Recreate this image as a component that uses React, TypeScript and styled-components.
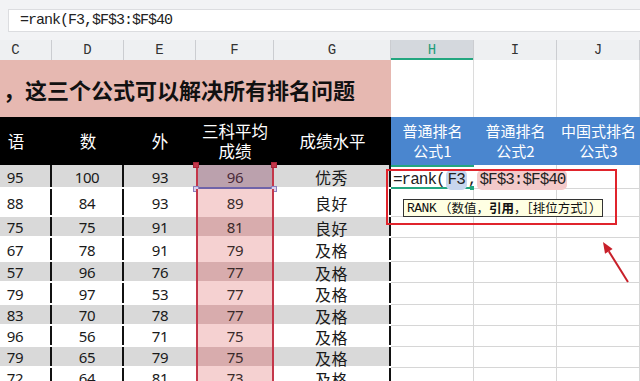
import React from "react";
import styled, { createGlobalStyle } from "styled-components";

const GlobalStyle = createGlobalStyle`
  html, body { margin: 0; padding: 0; background: #fff; overflow: hidden; }
  body { font-family: "Noto Sans", "Noto Sans CJK SC", sans-serif; }
`;

// C (clipped) D E F G H I J
const COLS = "52px 72px 72px 78px 117px 83px 83px 83px";
const MONO = `"Liberation Mono", "Noto Sans CJK SC", monospace`;
const CJK = `"Noto Sans CJK SC", "Noto Sans", sans-serif`;

const Screen = styled.div`
  position: relative;
  width: 640px;
  height: 381px;
  overflow: hidden;
  display: flex;
  flex-direction: column;
  background: #fff;

  & > * { flex-shrink: 0; }
`;

const FormulaBar = styled.div`
  height: 40px;
  box-sizing: border-box;
  padding: 9px 0 8px 8px;
  background: #f2f3f5;
  display: flex;
`;

const FormulaInput = styled.div`
  flex: 1;
  display: flex;
  align-items: center;
  padding-left: 11px;
  background: #fff;
  border: 1px solid #dcdde0;
  border-right: none;
  font-family: ${MONO};
  font-size: 15px;
  letter-spacing: -1px;
  color: #222;
`;

const ColHeaderRow = styled.div`
  display: grid;
  grid-template-columns: ${COLS};
  height: 20px;
  background: #eef0f2;
`;

const ColHead = styled.div<{ $active?: boolean; $clip?: boolean }>`
  display: flex;
  align-items: center;
  justify-content: center;
  padding-right: ${({ $clip }) => ($clip ? "20px" : "0")};
  font-family: ${MONO};
  font-size: 14px;
  color: ${({ $active }) => ($active ? "#1d9c7a" : "#333")};
  background: ${({ $active }) => ($active ? "#d4d8dd" : "transparent")};
  border-right: 1px solid #cbcdd1;
  box-shadow: ${({ $active }) => ($active ? "inset 0 -2px 0 #22a67f" : "none")};
`;

const TitleRow = styled.div`
  display: grid;
  grid-template-columns: ${COLS};
  height: 57px;
`;

const TitleCell = styled.div`
  grid-column: 1 / span 5;
  display: flex;
  align-items: center;
  justify-content: flex-end;
  padding-right: 36px;
  overflow: hidden;
  white-space: nowrap;
  background: #e6b8b1;
  font-family: ${CJK};
  font-size: 22px;
  font-weight: 700;
  color: #111;
`;

const BlankCell = styled.div`
  border-right: 1px solid #dcdcdc;
`;

const HeaderRow = styled.div`
  display: grid;
  grid-template-columns: ${COLS};
  height: 48px;
`;

const HeadCell = styled.div<{ $tone: "dark" | "blue"; $clip?: boolean }>`
  display: flex;
  align-items: center;
  justify-content: center;
  text-align: center;
  padding-right: ${({ $clip }) => ($clip ? "20px" : "0")};
  background: ${({ $tone }) => ($tone === "dark" ? "#000" : "#4a86cf")};
  color: #fff;
  font-family: ${CJK};
  font-size: ${({ $tone }) => ($tone === "dark" ? "16.5px" : "15px")};
  line-height: 20px;
  white-space: pre-line;
`;

const DataRow = styled.div<{ $h: number }>`
  display: grid;
  grid-template-columns: ${COLS};
  height: ${({ $h }) => $h}px;
`;

const Cell = styled.div<{ $band?: boolean; $edge?: boolean; $clip?: boolean; $cjk?: boolean }>`
  align-self: start;
  height: calc(100% - 2px);
  box-sizing: border-box;
  padding-top: 2px;
  display: flex;
  align-items: center;
  justify-content: center;
  padding-right: ${({ $clip }) => ($clip ? "20px" : "0")};
  background: ${({ $band }) => ($band ? "#d9d9d9" : "#fff")};
  border-right: ${({ $edge }) => ($edge ? "2px solid #111" : "none")};
  font-family: ${({ $cjk }) => ($cjk ? CJK : `"Noto Sans", sans-serif`)};
  font-size: ${({ $cjk }) => ($cjk ? "16px" : "15px")};
  line-height: 1;
  letter-spacing: ${({ $cjk }) => ($cjk ? "0.5px" : "-0.4px")};
  color: #1a1a1a;
`;

const ScoreCell = styled.div<{ $tone: "ref" | "band" | "plain" }>`
  position: relative;
  display: flex;
  align-items: center;
  justify-content: center;
  border-left: 2px solid #c4374a;
  border-right: 2px solid #c4374a;
  background: ${({ $tone }) =>
    $tone === "ref"
      ? "#bba1ad"
      : $tone === "band"
      ? "linear-gradient(#d8acad 0 calc(100% - 2px), #f5d1d1 calc(100% - 2px))"
      : "#f5d1d1"};
  box-shadow: ${({ $tone }) => ($tone === "ref" ? "inset 0 -2px 0 #6f63a9" : "none")};
  font-family: "Noto Sans", sans-serif;
  font-size: 15px;
  line-height: 1;
  letter-spacing: -0.4px;
  color: ${({ $tone }) => ($tone === "ref" ? "#4a2a3a" : "#3a2a2a")};
`;

const Handle = styled.span<{ $side: "left" | "right"; $pos: "top" | "bottom" }>`
  position: absolute;
  ${({ $side }) => ($side === "left" ? "left: -5px;" : "right: -5px;")}
  ${({ $pos }) => ($pos === "top" ? "top: -3px;" : "bottom: -3px;")}
  width: 6px;
  height: 6px;
  box-sizing: border-box;
  background: ${({ $pos }) => ($pos === "top" ? "#c4374a" : "#d9d2ee")};
  border: 1px solid ${({ $pos }) => ($pos === "top" ? "#a82638" : "#8c80bd")};
`;

const GridCell = styled.div`
  border-right: 1px solid #d6d6d6;
  border-bottom: 1px solid #d6d6d6;
`;

const ActiveCell = styled.div`
  position: relative;
  border-top: 2px solid #22a67f;
  border-bottom: 2px solid #22a67f;
  z-index: 2;
`;

const FillHandle = styled.span`
  position: absolute;
  right: 0;
  bottom: -3px;
  width: 4px;
  height: 4px;
  background: #22a67f;
`;

const Editor = styled.div`
  position: absolute;
  left: 2px;
  top: 3px;
  bottom: -3px;
  display: flex;
  align-items: center;
  white-space: nowrap;
  font-family: ${MONO};
  font-size: 16px;
  letter-spacing: -1px;
  color: #222;
`;

const RefPill = styled.span<{ $tone: "blue" | "pink" }>`
  padding: 1px 2px;
  margin: 0 1px;
  border-radius: 5px;
  background: ${({ $tone }) => ($tone === "blue" ? "#c8d6ee" : "#f3caca")};
`;

const Tooltip = styled.div`
  position: absolute;
  left: 403px;
  top: 199px;
  width: 200px;
  height: 18px;
  box-sizing: border-box;
  padding: 0 3px;
  display: flex;
  align-items: center;
  white-space: nowrap;
  background: #ffffe3;
  border: 1px solid #333;
  font-family: ${CJK};
  font-size: 12.5px;
  line-height: 1;
  color: #111;
  z-index: 3;

  b { font-weight: 700; }
  span { font-family: ${MONO}; font-size: 13px; letter-spacing: -0.5px; }
`;

const Callout = styled.div`
  position: absolute;
  left: 386px;
  top: 169px;
  width: 231px;
  height: 56px;
  box-sizing: border-box;
  border: 2px solid #e0242c;
  z-index: 4;
`;

const Arrow = styled.svg`
  position: absolute;
  left: 596px;
  top: 236px;
  z-index: 4;
`;

const rows = [
  { c: "95", d: "100", e: "93", f: "96", g: "优秀", h: 24 },
  { c: "88", d: "84", e: "93", f: "89", g: "良好", h: 28 },
  { c: "75", d: "75", e: "91", f: "81", g: "良好", h: 21 },
  { c: "67", d: "78", e: "91", f: "79", g: "及格", h: 24 },
  { c: "57", d: "96", e: "76", f: "77", g: "及格", h: 21 },
  { c: "79", d: "97", e: "53", f: "77", g: "及格", h: 22 },
  { c: "83", d: "70", e: "78", f: "77", g: "及格", h: 21 },
  { c: "96", d: "56", e: "71", f: "75", g: "及格", h: 21 },
  { c: "79", d: "65", e: "79", f: "75", g: "及格", h: 21 },
  { c: "72", d: "64", e: "81", f: "73", g: "及格", h: 21 },
];

const letters = ["C", "D", "E", "F", "G", "H", "I", "J"];

export default function App() {
  return (
    <Screen>
      <GlobalStyle />
      <FormulaBar>
        <FormulaInput>=rank(F3,$F$3:$F$40</FormulaInput>
      </FormulaBar>

      <ColHeaderRow>
        {letters.map((l, i) => (
          <ColHead key={l} $clip={i === 0} $active={l === "H"}>
            {l}
          </ColHead>
        ))}
      </ColHeaderRow>

      <TitleRow>
        <TitleCell>，这三个公式可以解决所有排名问题</TitleCell>
        <BlankCell />
        <BlankCell />
        <BlankCell />
      </TitleRow>

      <HeaderRow>
        <HeadCell $tone="dark" $clip>语</HeadCell>
        <HeadCell $tone="dark">数</HeadCell>
        <HeadCell $tone="dark">外</HeadCell>
        <HeadCell $tone="dark">{"三科平均\n成绩"}</HeadCell>
        <HeadCell $tone="dark">成绩水平</HeadCell>
        <HeadCell $tone="blue">{"普通排名\n公式1"}</HeadCell>
        <HeadCell $tone="blue">{"普通排名\n公式2"}</HeadCell>
        <HeadCell $tone="blue">{"中国式排名\n公式3"}</HeadCell>
      </HeaderRow>

      {rows.map((r, i) => {
        const band = i % 2 === 0;
        return (
          <DataRow key={i} $h={r.h}>
            <Cell $band={band} $edge $clip>{r.c}</Cell>
            <Cell $band={band} $edge>{r.d}</Cell>
            <Cell $band={band}>{r.e}</Cell>
            <ScoreCell $tone={i === 0 ? "ref" : band ? "band" : "plain"}>
              {r.f}
              {i === 0 && (
                <>
                  <Handle $side="left" $pos="top" />
                  <Handle $side="right" $pos="top" />
                  <Handle $side="left" $pos="bottom" />
                  <Handle $side="right" $pos="bottom" />
                </>
              )}
            </ScoreCell>
            <Cell $band={band} $edge $cjk>{r.g}</Cell>
            {i === 0 ? (
              <ActiveCell>
                <Editor>
                  =rank(<RefPill $tone="blue">F3</RefPill>,<RefPill $tone="pink">$F$3:$F$40</RefPill>
                </Editor>
                <FillHandle />
              </ActiveCell>
            ) : (
              <GridCell />
            )}
            <GridCell />
            <GridCell />
          </DataRow>
        );
      })}

      <Tooltip>
        <span>RANK</span>&nbsp;（数值，<b>引用</b>，［排位方式］）
      </Tooltip>
      <Callout />
      <Arrow width="40" height="50" viewBox="0 0 40 50">
        <line x1="32" y1="46" x2="12.8" y2="15.3" stroke="#c8202a" strokeWidth="2" />
        <polygon points="7,6 16.6,12.9 9,17.7" fill="#c8202a" />
      </Arrow>
    </Screen>
  );
}
